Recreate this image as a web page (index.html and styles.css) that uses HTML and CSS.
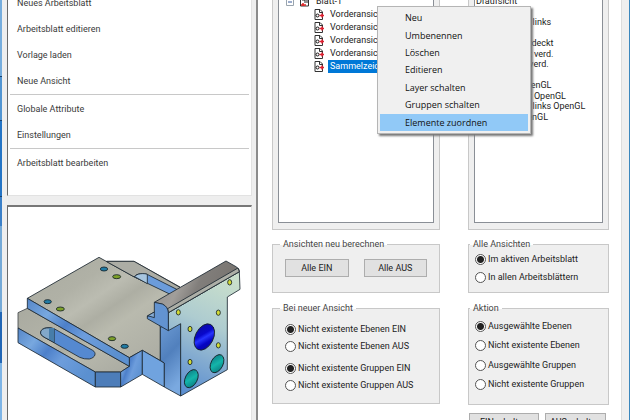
FILE: index.html
```
<!DOCTYPE html>
<html lang="de">
<head>
<meta charset="utf-8">
<title>Arbeitsblatt</title>
<link rel="stylesheet" href="styles.css">
</head>
<body>
<svg class="defs" aria-hidden="true">
  <symbol id="view-icon" viewBox="0 0 10 11">
    <path d="M1 10.500V.5h5L8.500 3v7.500z" fill="#fff" stroke="#333"/>
    <path d="M5.500 1v2.500h3" fill="none" stroke="#333"/>
    <circle cx="3.500" cy="6.500" r="1.500" fill="#fff" stroke="#111"/>
    <path d="M5.500 6.500H10M8 4.500v4" stroke="#e02030" stroke-width="1.500"/>
  </symbol>
</svg>
<div class="window">
  <div class="desktop"></div>
  <aside class="side">
    <nav class="menu-panel">
      <ul>
        <li><a href="#">Neues Arbeitsblatt</a></li>
        <li><a href="#">Arbeitsblatt editieren</a></li>
        <li><a href="#">Vorlage laden</a></li>
        <li><a href="#">Neue Ansicht</a></li>
        <li class="start"><a href="#">Globale Attribute</a></li>
        <li><a href="#">Einstellungen</a></li>
        <li class="start"><a href="#">Arbeitsblatt bearbeiten</a></li>
      </ul>
    </nav>
    <div class="preview">
      <svg viewBox="24 18 729 660" role="img" aria-label="3D-Modell">
        <defs>
          <linearGradient id="plate" x1="0" y1="0" x2="1" y2="1">
            <stop offset="0" stop-color="#a9aaa0"/><stop offset=".3" stop-color="#b0b1a6"/><stop offset=".42" stop-color="#bbbcb1"/><stop offset=".52" stop-color="#adaea3"/><stop offset=".62" stop-color="#b9baae"/><stop offset="1" stop-color="#a9aaa1"/>
          </linearGradient>
          <linearGradient id="blue" x1="0" y1="0" x2="1" y2=".6">
            <stop offset="0" stop-color="#5586c8"/><stop offset=".25" stop-color="#78a8df"/><stop offset=".45" stop-color="#4d80ca"/><stop offset=".65" stop-color="#6d9ddc"/><stop offset="1" stop-color="#5b90d0"/>
          </linearGradient>
          <linearGradient id="front" x1=".6" y1="0" x2=".35" y2="1">
            <stop offset="0" stop-color="#c9dfcc"/><stop offset=".4" stop-color="#aeccd0"/><stop offset=".7" stop-color="#83abd0"/><stop offset="1" stop-color="#5c8fd0"/>
          </linearGradient>
          <linearGradient id="column" x1="0" y1="0" x2=".3" y2="1">
            <stop offset="0" stop-color="#6c9bd4"/><stop offset=".5" stop-color="#5180bd"/><stop offset="1" stop-color="#7aa9e0"/>
          </linearGradient>
          <linearGradient id="rail" x1="0" y1="0" x2="1" y2=".3">
            <stop offset="0" stop-color="#8d8b88"/><stop offset=".4" stop-color="#a19e9a"/><stop offset=".6" stop-color="#817e7b"/><stop offset="1" stop-color="#77736f"/>
          </linearGradient>
          <linearGradient id="bore" x1="0" y1="0" x2="1" y2="1">
            <stop offset="0" stop-color="#0b0b98"/><stop offset=".4" stop-color="#0808cc"/><stop offset=".52" stop-color="#2634ff"/><stop offset=".7" stop-color="#0505c4"/><stop offset="1" stop-color="#080890"/>
          </linearGradient>
          <linearGradient id="teal" x1="0" y1="0" x2="1" y2="1">
            <stop offset="0" stop-color="#0b7480"/><stop offset=".5" stop-color="#14b5aa"/><stop offset="1" stop-color="#087078"/>
          </linearGradient>
        </defs>
        <g stroke="#1b2630" stroke-width="2.500" stroke-linejoin="round">
          <path d="M320 181H402L540 258 500 300z" fill="url(#plate)" stroke="#4a4d50"/>
          <path d="M297 169 82 292 388 470 427 448 481 479V378L460 340 535 285 403 228z" fill="url(#plate)"/>
          <path d="M403 228 320 182 402 181 540 260 520 285z" fill="#acada5" stroke="none"/>
          <path d="M320 181H402L540 259M320 182 403 228" fill="none"/>
          <path d="M403 228C408 215 440 216 447 223L536 268 515 282z" fill="#6b9cdb"/>
          <path d="M404 227C410 217 432 216 442 220V248z" fill="#a7c5df"/>
          <path d="M54 335 82 322 388 496 362 513H286L54 381z" fill="url(#plate)" stroke="#414649"/>
          <path d="M54 381 286 513V558L54 425z" fill="url(#blue)"/>
          <path d="M286 513H362V558H286z" fill="#4d7db9"/>
          <path d="M362 513 388 496V470L427 448V520L362 558z" fill="url(#blue)"/>
          <path d="M427 448 493 486V558L427 520z" fill="#70a3df"/>
          <path d="M82 292 388 470V496L82 322z" fill="url(#blue)"/>
          <path d="M122 398C119 382 143 376 162 383L278 448C290 455 287 470 268 474Q252 475 239 469L137 411Q125 406 122 398z" fill="#5589d0"/>
          <path d="M122 398C119 382 143 376 163 384V424L137 411Q125 406 122 398z" fill="#82a8c9"/>
          <path d="M147 381H163V424L147 415z" fill="#477da9" stroke="none"/>
          <path d="M481 378 542 368V585L493 558V486L481 478z" fill="url(#column)"/>
          <path d="M505 335 718 212 720 265 682 288V506L542 585V368L505 389z" fill="url(#front)"/>
          <path d="M463 304 678 180 708 197Q720 204 718 212L505 335Q503 317 488 310z" fill="url(#rail)"/>
          <path d="M503 323 714 201 718 212 505 335z" fill="#adafa7"/>
          <path d="M463 304 487 309Q504 317 505 335V389L442 353V345L463 333z" fill="#6293d1"/>
          <path d="M442 345 463 333V350L450 346z" fill="#87acd6"/>
        </g>
        <g stroke="#152026" stroke-width="2.500">
          <g fill="#217ca5"><ellipse cx="312" cy="204" rx="11" ry="6"/><ellipse cx="143" cy="302" rx="11" ry="6"/><ellipse cx="374" cy="436" rx="11" ry="6"/></g>
          <g fill="#7da029"><ellipse cx="350" cy="227" rx="12" ry="6"/><ellipse cx="181" cy="324" rx="12" ry="6"/><ellipse cx="336" cy="413" rx="11" ry="6"/></g>
          <g fill="#d3dc35"><ellipse cx="689" cy="244" rx="6" ry="8"/><ellipse cx="535" cy="334" rx="6" ry="8"/><ellipse cx="655" cy="335" rx="6" ry="8"/><ellipse cx="570" cy="384" rx="6" ry="8"/><ellipse cx="655" cy="433" rx="6" ry="8"/><ellipse cx="570" cy="483" rx="6" ry="8"/></g>
          <ellipse cx="613" cy="408" rx="27" ry="42" transform="rotate(27 613 408)" fill="url(#bore)"/>
          <ellipse cx="651" cy="488" rx="18" ry="29" transform="rotate(27 651 488)" fill="url(#teal)"/>
          <ellipse cx="574" cy="533" rx="18" ry="29" transform="rotate(27 574 533)" fill="url(#teal)"/>
        </g>
      </svg>
    </div>
  </aside>
  <main class="page">
    <section class="frame top">
      <div class="box">
        <div class="node root">
          <svg class="toggle" viewBox="0 0 8 8"><path d="M.5.5h7v7h-7z" fill="#fff" stroke="#9aa5ae"/><path d="M2 4h4" stroke="#3b5a9a"/></svg>
          <svg class="sheet" viewBox="0 0 11 11"><path d="M1.500 10V2.500L3.500.5h6V10z" fill="#fff" stroke="#333"/><path d="M3 4h3v3M8 2v5" fill="none" stroke="#222"/><path d="M2 9h5M4 7v3" stroke="#d22" stroke-width="1.500"/></svg>
          <span>Blatt-1</span>
        </div>
        <ul class="tree">
          <li class="node"><svg class="icon"><use href="#view-icon"/></svg><span>Vorderansicht</span></li>
          <li class="node"><svg class="icon"><use href="#view-icon"/></svg><span>Vorderansicht</span></li>
          <li class="node"><svg class="icon"><use href="#view-icon"/></svg><span>Vorderansicht</span></li>
          <li class="node"><svg class="icon"><use href="#view-icon"/></svg><span>Vorderansicht</span></li>
          <li class="node"><svg class="icon"><use href="#view-icon"/></svg><span class="selected">Sammelzeichnung</span></li>
        </ul>
      </div>
    </section>
    <section class="frame top">
      <ul class="box views">
        <li>Draufsicht</li><li>Vorderans.</li><li>Seitenansicht links</li><li>Isometrie</li>
        <li>Draufsicht verdeckt</li><li>Vorderansicht verd.</li><li>Seitenans. li. verd.</li><li>Isometr. verd.</li>
        <li>Draufsicht OpenGL</li><li>Vorderansicht OpenGL</li><li>Seitenansicht links OpenGL</li><li>Isometrie OpenGL</li>
      </ul>
    </section>
    <fieldset class="frame calc">
      <legend>Ansichten neu berechnen</legend>
      <div class="pair"><button type="button">Alle EIN</button><button type="button">Alle AUS</button></div>
    </fieldset>
    <fieldset class="frame sheets">
      <legend>Alle Ansichten</legend>
      <label><input type="radio" name="scope" checked>Im aktiven Arbeitsblatt</label>
      <label><input type="radio" name="scope">In allen Arbeitsblättern</label>
    </fieldset>
    <fieldset class="frame newview">
      <legend>Bei neuer Ansicht</legend>
      <label><input type="radio" name="layers" checked>Nicht existente Ebenen EIN</label>
      <label><input type="radio" name="layers">Nicht existente Ebenen AUS</label>
      <label class="second"><input type="radio" name="groups" checked>Nicht existente Gruppen EIN</label>
      <label><input type="radio" name="groups">Nicht existente Gruppen AUS</label>
    </fieldset>
    <fieldset class="frame action">
      <legend>Aktion</legend>
      <label><input type="radio" name="action" checked>Ausgewählte Ebenen</label>
      <label><input type="radio" name="action">Nicht existente Ebenen</label>
      <label class="second"><input type="radio" name="action">Ausgewählte Gruppen</label>
      <label><input type="radio" name="action">Nicht existente Gruppen</label>
    </fieldset>
    <div class="switches"><button type="button">EINschalten</button><button type="button">AUSschalten</button></div>
    <div class="context" role="menu">
      <button type="button" role="menuitem">Neu</button>
      <button type="button" role="menuitem">Umbenennen</button>
      <button type="button" role="menuitem">Löschen</button>
      <button type="button" role="menuitem">Editieren</button>
      <button type="button" role="menuitem">Layer schalten</button>
      <button type="button" role="menuitem">Gruppen schalten</button>
      <button type="button" role="menuitem" class="active">Elemente zuordnen</button>
    </div>
  </main>
  <div class="edge"></div>
</div>
</body>
</html>
```
FILE: styles.css
```
* { box-sizing: border-box; }
html, body { height: 100%; margin: 0; overflow: hidden; }
body { background: #efefef; color: #222; font: 9px/13px Roboto, "Liberation Sans", sans-serif; }
ul { list-style: none; margin: 0; padding: 0; }
a { color: inherit; text-decoration: none; }
button { font: inherit; color: inherit; padding: 0; }
.defs { display: none; }

.window { display: grid; grid-template-columns: 2px 256px 1fr 9px; height: 100vh; }
.desktop {
  background: linear-gradient(#76addd 0 76px, #18426f 76px 77px, #5295d2 77px 120px, #18426f 120px 121px, #2474c5 121px 196px, #18426f 196px 197px, #3b80c8 197px 226px, #74a9d7 226px 312px, #2266b5 312px 363px, #7db4e6 363px);
}
.edge { background: #efefef; border-left: 1px solid #ddd; border-right: 1px solid #3b87bd; }

.side { display: flex; flex-direction: column; gap: 9px; padding: 0 4px 0 5px; background: #eee; border-right: 2px solid #8b8b8b; min-height: 0; }
.menu-panel, .preview { background: #fff; border: 1px solid #e2e2e2; border-left-color: #696969; }
.menu-panel { margin-top: -11px; padding: 0 2px 19px; color: #3a3a3a; }
.menu-panel a { display: block; padding: 0 7px; line-height: 26px; }
.start { border-top: 1px solid #c8c8c8; padding-top: 1px; }
.preview { flex: 1; min-height: 0; border-top: 2px solid #777; overflow: hidden; }
.preview svg { display: block; width: 100%; }

.page { position: relative; display: grid; grid-template-columns: 168fr 141fr; align-content: start; column-gap: 28px; padding: 0 12px 0 14px; background: #fff; }
.frame { min-width: 0; margin: 0; padding: 0 12px; background: #efefef; border: 1px solid #c8c8c8; }
.top { margin-bottom: 8px; padding: 0 5px 6px; border-top: 0; }
.box { height: 223px; background: #fff; border: 1px solid #8a8f96; border-top: 0; overflow: hidden; }
.node { display: flex; align-items: center; height: 13px; white-space: nowrap; }
.root { margin-top: -5px; padding-left: 7px; }
.toggle { width: 8px; height: 8px; margin-right: 5px; }
.sheet { width: 11px; height: 11px; margin-right: 4px; }
.tree { padding-left: 35px; }
.icon { width: 10px; height: 11px; margin-right: 4px; }
.node span { padding: 0 2px; }
.node .selected { background: #0078d7; color: #fff; }
.views { padding: 0 1px; }
.views li { height: 10px; line-height: 10px; white-space: nowrap; }
.views li:nth-child(odd) { height: 11px; }
.views li:first-child { margin-top: -4px; }

legend { margin-left: -5px; padding: 0 3px; line-height: 13px; background: linear-gradient(#fff 50%, #efefef 50%); color: #444; }
fieldset label { display: flex; align-items: center; height: 17px; white-space: nowrap; }
input[type="radio"] { appearance: none; width: 11px; height: 11px; margin: 0 2px 0 0; border: 1px solid #555; border-radius: 50%; background: #fff; }
input[type="radio"]:checked { background: radial-gradient(circle, #222 0 3px, #fff 4px); }
.calc, .sheets { height: 55px; margin-bottom: 9px; }
.pair { display: grid; grid-template-columns: 1fr 1fr; gap: 15px; padding-top: 8px; }
.pair button { height: 18px; }
fieldset button, .switches button { background: #e1e1e1; border: 1px solid #adadad; }
.sheets, .action { padding: 0 6px; }
.sheets label + label { margin-top: 1px; }
.newview { height: 102px; padding-top: 6px; }
.newview .second { margin-top: 5px; }
.action { height: 103px; padding-top: 3px; }
.action label + label { margin-top: 2px; }
.action .second { margin-top: 3px; }
.switches { grid-column: 2; display: grid; grid-template-columns: 71fr 62fr; gap: 6px; padding: 8px 3px 0 1px; }
.switches button { height: 18px; }

.context { position: absolute; left: 119px; top: 6px; width: 154px; height: 128px; padding: 2px; display: grid; grid-auto-rows: 1fr; background: #f0f0f0; border: 1px solid #b5b5b5; box-shadow: 2px 2px 2px #777; font-family: "Open Sans", "Noto Sans", sans-serif; color: #111; }
.context button { padding-left: 25px; background: none; border: 0; text-align: left; line-height: 13px; }
.context .active { background: #91c9f7; }
```
